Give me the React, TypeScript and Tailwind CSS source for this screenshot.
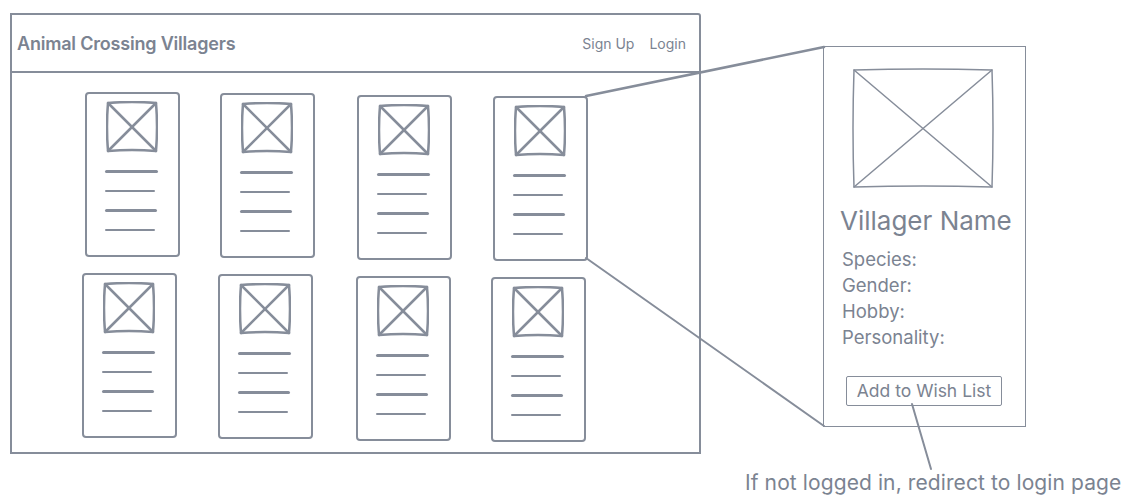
import React from "react";

const STROKE = "#868d9a";

const cardOffsets = [
  ["mt-0 ml-0", "mt-[1px] -ml-[1px]", "mt-[3px] ml-[1px]", "mt-[4px] ml-0"],
  ["-ml-[3px] mt-0", "ml-0 mt-[1px]", "ml-[2px] mt-[3px]", "-ml-[1px] mt-[4px]"],
];

const ImageBox = ({ w, h, sw }: { w: number; h: number; sw: number }) => (
  <svg width={w} height={h} viewBox={`0 0 ${w} ${h}`} className="block">
    <path
      d={`M2 2 Q${w / 2} 0 ${w - 2} 2 Q${w} ${h / 2} ${w - 2} ${h - 2} Q${w / 2} ${h - 4} 2 ${h - 2} Q0 ${h / 2} 2 2 Z`}
      fill="none"
      stroke={STROKE}
      strokeWidth={sw}
      strokeLinejoin="round"
    />
    <line x1={2} y1={2} x2={w - 2} y2={h - 2} stroke={STROKE} strokeWidth={sw} strokeLinecap="round" />
    <line x1={w - 2} y1={2} x2={2} y2={h - 2} stroke={STROKE} strokeWidth={sw} strokeLinecap="round" />
  </svg>
);

const Card = ({ offset }: { offset: string }) => (
  <div className={`w-[95px] h-[165px] border-[2.5px] border-[#868d9a] rounded-[4px] flex flex-col items-center pt-[7px] ${offset}`}>
    <div className="ml-[-2px]">
      <ImageBox w={52} h={52} sw={2.5} />
    </div>
    <div className="flex flex-col gap-[17px] mt-[17px] ml-[-2px]">
      <div className="w-[53px] h-[2.5px] bg-[#868d9a] rounded-full" />
      <div className="w-[50px] h-[2.5px] bg-[#868d9a] rounded-full" />
      <div className="w-[52px] h-[2.5px] bg-[#868d9a] rounded-full" />
      <div className="w-[50px] h-[2.5px] bg-[#868d9a] rounded-full" />
    </div>
  </div>
);

export default function App() {
  return (
    <div
      className="relative w-[1145px] h-[498px] bg-white flex text-[#7b8391]"
      style={{ fontFamily: "Inter, 'Liberation Sans', sans-serif" }}
    >
      {/* main site frame */}
      <div className="ml-[10px] mt-[13px] w-[691px] h-[441px] border-[2.5px] border-[#868d9a] rounded-tr-[3px] flex flex-col">
        <div className="h-[58px] border-b-[2.5px] border-[#868d9a] flex items-center justify-between pl-[5px] pr-[13px]">
          <span className="text-[18px] font-semibold tracking-[-0.2px]">Animal Crossing Villagers</span>
          <div className="flex gap-[15px] text-[14px]">
            <span>Sign Up</span>
            <span>Login</span>
          </div>
        </div>
        <div className="flex flex-col gap-[12px] pl-[73px] pt-[19px]">
          {cardOffsets.map((row, r) => (
            <div key={r} className="flex gap-[41px] items-start">
              {row.map((o, i) => (
                <Card key={i} offset={o} />
              ))}
            </div>
          ))}
        </div>
      </div>

      {/* detail column */}
      <div className="ml-[44px] flex flex-col">
        <div className="ml-[78px] mt-[46px] w-[203px] h-[381px] border-[1.5px] border-[#868d9a] flex flex-col pl-[17px]">
          <div className="ml-[11px] mt-[21px]">
            <ImageBox w={142} h={121} sw={1.5} />
          </div>
          <div className="mt-[16px] text-[26px] leading-[32px] ml-[-1px]">Villager Name</div>
          <div className="mt-[9px] flex flex-col text-[18.5px] leading-[26px] ml-[1px]">
            <span>Species:</span>
            <span>Gender:</span>
            <span>Hobby:</span>
            <span>Personality:</span>
          </div>
          <div className="mt-[26px] ml-[5px] w-[156px] h-[30px] border-[1.5px] border-[#868d9a] rounded-[2px] flex items-center justify-center text-[17.5px]">
            Add to Wish List
          </div>
        </div>
        <div className="mt-[43px] text-[21px] leading-[26px] whitespace-nowrap tracking-[0.1px]">
          If not logged in, redirect to login page
        </div>
      </div>

      {/* connector lines */}
      <svg className="absolute inset-0 pointer-events-none" width={1145} height={498}>
        <line x1={586} y1={96} x2={824} y2={47} stroke={STROKE} strokeWidth={2.5} strokeLinecap="round" />
        <line x1={586} y1={258} x2={824} y2={426} stroke={STROKE} strokeWidth={2} strokeLinecap="round" />
        <line x1={912} y1={404} x2={931} y2={469} stroke={STROKE} strokeWidth={2} strokeLinecap="round" />
      </svg>
    </div>
  );
}
